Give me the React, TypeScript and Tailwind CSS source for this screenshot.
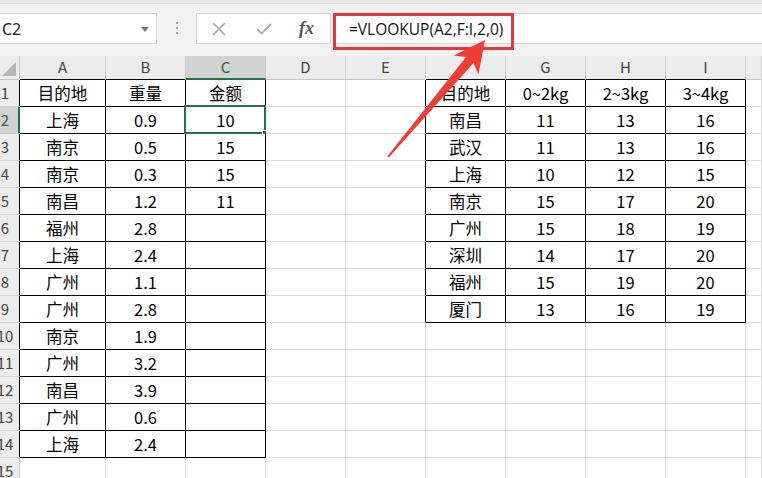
import React from "react";

// Excel-like sheet: VLOOKUP demo with annotation arrow
const COLS = ["A", "B", "C", "D", "E", "F", "G", "H", "I", ""];

const left: string[][] = [
  ["目的地", "重量", "金额"],
  ["上海", "0.9", "10"],
  ["南京", "0.5", "15"],
  ["南京", "0.3", "15"],
  ["南昌", "1.2", "11"],
  ["福州", "2.8", ""],
  ["上海", "2.4", ""],
  ["广州", "1.1", ""],
  ["广州", "2.8", ""],
  ["南京", "1.9", ""],
  ["广州", "3.2", ""],
  ["南昌", "3.9", ""],
  ["广州", "0.6", ""],
  ["上海", "2.4", ""],
];

const right: string[][] = [
  ["目的地", "0~2kg", "2~3kg", "3~4kg"],
  ["南昌", "11", "13", "16"],
  ["武汉", "11", "13", "16"],
  ["上海", "10", "12", "15"],
  ["南京", "15", "17", "20"],
  ["广州", "15", "18", "19"],
  ["深圳", "14", "17", "20"],
  ["福州", "15", "19", "20"],
  ["厦门", "13", "16", "19"],
];

const inTable = (r: number, c: number) =>
  (r >= 1 && r <= 14 && c >= 0 && c <= 2) || (r >= 1 && r <= 9 && c >= 5 && c <= 8);

const valueAt = (r: number, c: number) => {
  if (r >= 1 && r <= 14 && c <= 2) return left[r - 1][c];
  if (r >= 1 && r <= 9 && c >= 5 && c <= 8) return right[r - 1][c - 5];
  return "";
};

function NameBox() {
  return (
    <div className="relative h-[31px] w-[157px] border-y border-r border-[#d6d6d6] bg-white">
      <span className="absolute left-[2px] top-[3px] text-[16px] text-[#222]">C2</span>
      <svg className="absolute left-[141px] top-[13px]" width="8" height="5" viewBox="0 0 8 5">
        <path d="M0 0h8L4 5z" fill="#7a7a7a" />
      </svg>
    </div>
  );
}

function FormulaIcons() {
  return (
    <div className="flex h-[31px] w-[135px] items-center border border-[#d6d6d6] bg-white">
      <svg className="ml-[15px]" width="14" height="14" viewBox="0 0 14 14">
        <path d="M1 1l12 12M13 1L1 13" stroke="#a3a3a3" strokeWidth="1.6" />
      </svg>
      <svg className="ml-[30px]" width="16" height="12" viewBox="0 0 16 12">
        <path d="M1 6l4.5 4.5L15 1" stroke="#b0b0b0" strokeWidth="1.8" fill="none" />
      </svg>
      <span className="ml-[27px] text-[18px] italic font-bold text-[#555] [font-family:'Liberation_Serif',serif]">
        fx
      </span>
    </div>
  );
}

function Toolbar() {
  return (
    <div className="h-[56px] bg-[#f1f1f1]">
      <div className="h-[4px] border-b border-[#dcdcdc] bg-[#e6e6e6]" />
      <div className="flex pt-[9px]">
        <NameBox />
        <div className="flex w-[39px] flex-col items-center gap-[3px] pt-[9px]">
          <div className="h-[2px] w-[2px] bg-[#a8a8a8]" />
          <div className="h-[2px] w-[2px] bg-[#a8a8a8]" />
          <div className="h-[2px] w-[2px] bg-[#a8a8a8]" />
        </div>
        <FormulaIcons />
        <div className="ml-[2px] h-[31px] flex-1 border-y border-[#d6d6d6] bg-white pl-[16px] pt-[4px] text-[15.5px] text-[#111] [font-family:'Open_Sans',sans-serif]">
          =VLOOKUP(A2,F:I,2,0)
        </div>
      </div>
    </div>
  );
}

function Sheet() {
  const rows = Array.from({ length: 15 }, (_, i) => i + 1);
  return (
    <div className="grid grid-cols-[20px_86px_80px_80px_80px_80px_80px_80px_80px_80px_1fr] grid-rows-[24px] auto-rows-[27px] [font-family:'Noto_Sans_CJK_SC',sans-serif]">
      {/* corner */}
      <div className="relative border-r border-b border-[#c6c6c6] bg-[#ececec]">
        <svg className="absolute right-[3px] bottom-[3px]" width="14" height="14" viewBox="0 0 14 14">
          <path d="M14 0v14H0z" fill="#b5b5b5" />
        </svg>
      </div>
      {COLS.map((h, c) => (
        <div
          key={"h" + c}
          className={`flex items-center justify-center border-r text-[15px] ${
            c === 2
              ? "border-b-2 border-b-[#217346] border-r-[#c6c6c6] bg-[#d3d3d3] text-[#2e5d43]"
              : inTable(1, c)
              ? "border-b border-b-black border-r-[#d0d0d0] bg-[#ececec] text-[#444]"
              : "border-b border-b-[#c6c6c6] border-r-[#d0d0d0] bg-[#ececec] text-[#444]"
          }`}
        >
          {h}
        </div>
      ))}
      {rows.map((r) => (
        <React.Fragment key={r}>
          <div
            className={`overflow-hidden text-[15px] leading-[26px] ${
              r === 2
                ? "border-r-2 border-r-[#217346] border-b border-b-[#c6c6c6] bg-[#d3d3d3] text-[#2e5d43]"
                : inTable(r, 0)
                ? "border-r border-r-black border-b border-b-[#d0d0d0] bg-[#ececec] text-[#444]"
                : "border-r border-r-[#c6c6c6] border-b border-b-[#d0d0d0] bg-[#ececec] text-[#444]"
            }`}
          >
            <div className="-ml-[10px] w-[30px] text-center">{r}</div>
          </div>
          {COLS.map((_, c) => {
            const rb = inTable(r, c) || inTable(r, c + 1);
            const bb = inTable(r, c) || inTable(r + 1, c);
            return (
              <div
                key={c}
                className={`relative flex items-center justify-center bg-white text-[16.5px] text-black border-r border-b ${
                  rb ? "border-r-black" : "border-r-[#d9d9d9]"
                } ${bb ? "border-b-black" : "border-b-[#d9d9d9]"}`}
              >
                {valueAt(r, c)}
                {r === 2 && c === 2 && (
                  <div className="absolute -left-[2px] -top-[2px] -right-px -bottom-px border-2 border-[#217346]">
                    <div className="absolute -right-[4px] -bottom-[4px] h-[6px] w-[6px] border border-white bg-[#217346]" />
                  </div>
                )}
              </div>
            );
          })}
        </React.Fragment>
      ))}
    </div>
  );
}

export default function App() {
  return (
    <div className="relative h-[478px] w-[762px] overflow-hidden bg-white">
      <Toolbar />
      <Sheet />
      {/* annotation */}
      <div className="pointer-events-none absolute left-[333px] top-[13px] h-[37px] w-[181px] border-[3px] border-[#e5383b]" />
      <svg className="pointer-events-none absolute inset-0" width="762" height="478" viewBox="0 0 762 478">
        <polygon
          points="485,40 453.6,55.5 466,57 387.2,156.4 388.8,157.6 473.5,63 478.4,74.6"
          fill="#ee3f37"
        />
      </svg>
    </div>
  );
}
